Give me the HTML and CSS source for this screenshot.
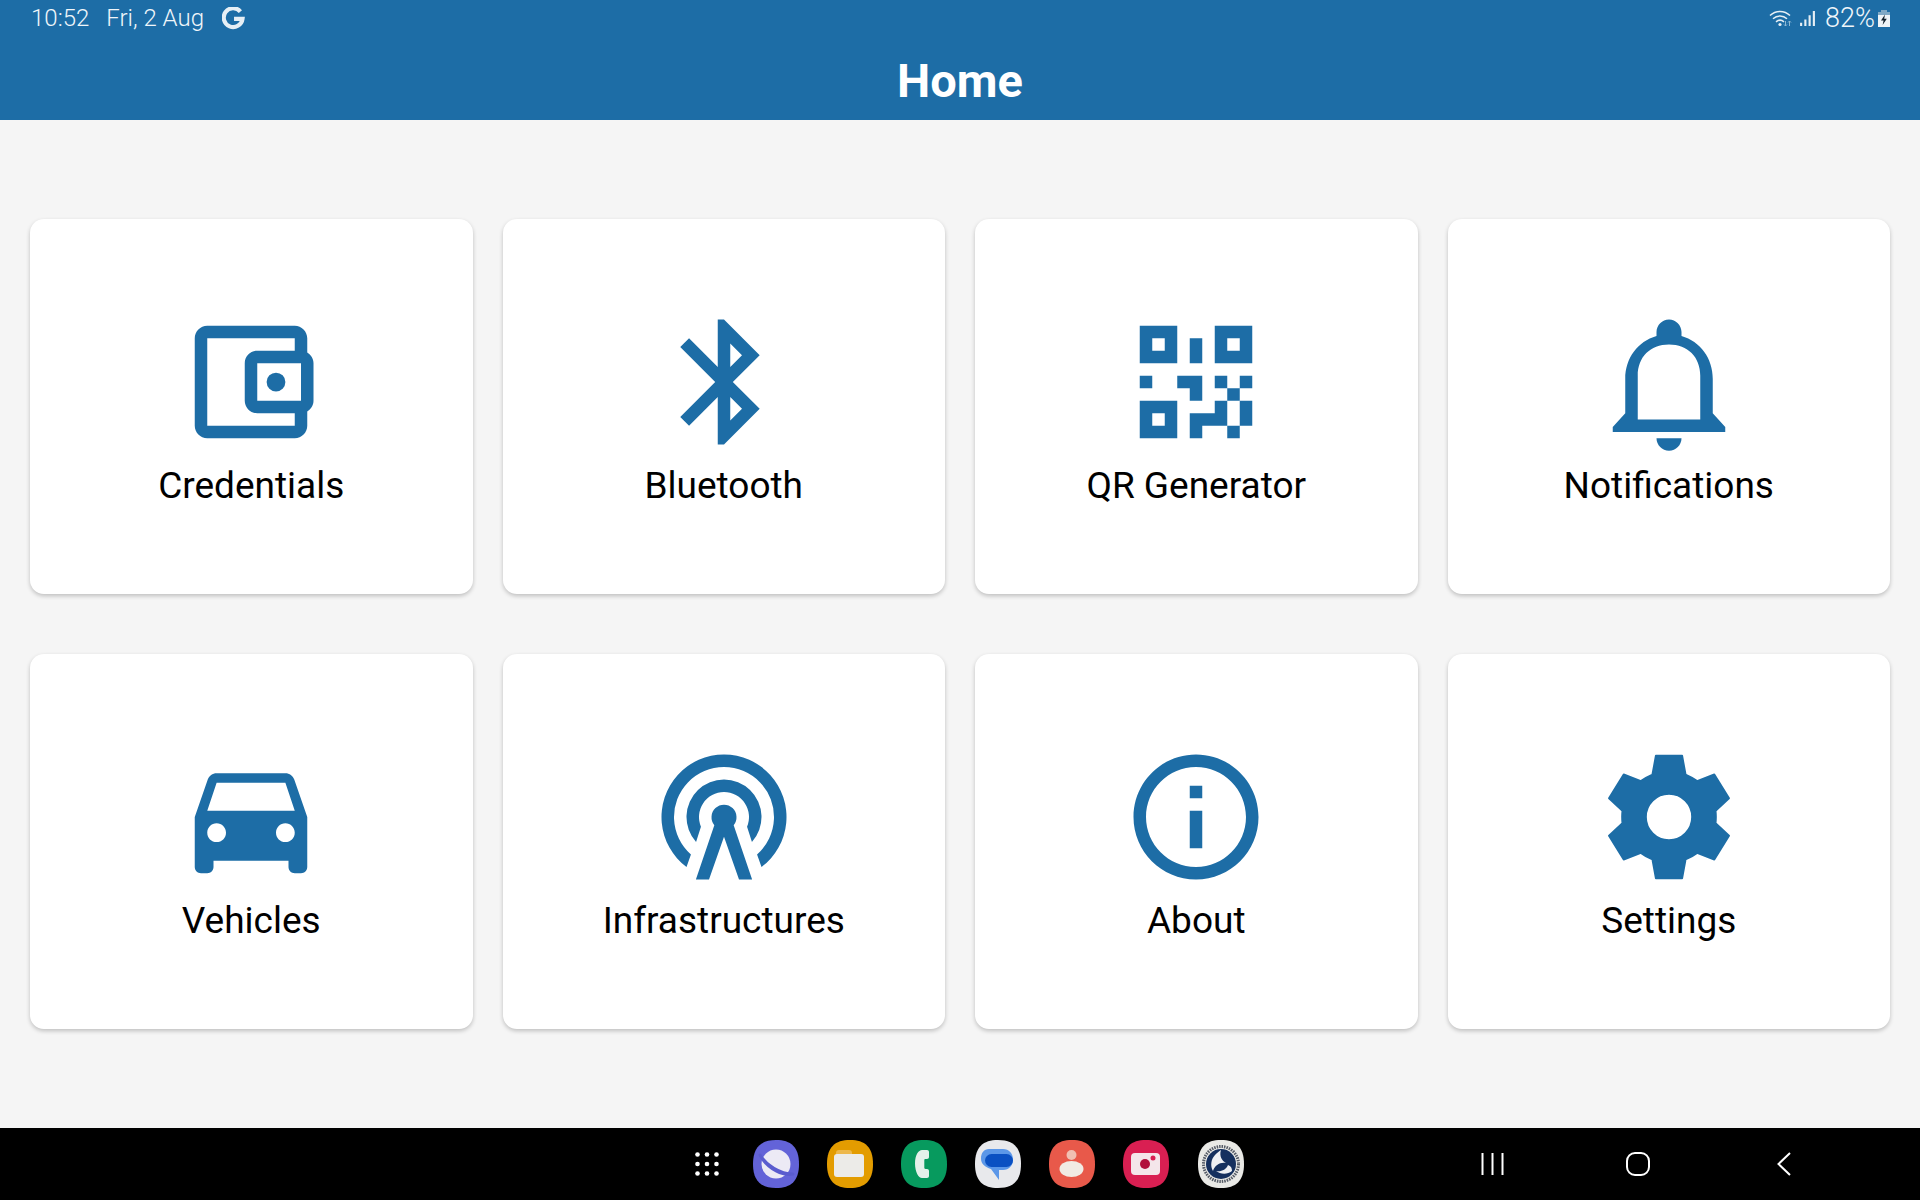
FILE: index.html
```html
<!DOCTYPE html>
<html lang="en">
<head>
<meta charset="utf-8">
<title>Home</title>
<link rel="stylesheet" href="styles.css">
</head>
<body>
<div class="app">
  <header class="header">
    <div class="statusbar">
      <div class="status-left">
        <span class="time">10:52</span>
        <span class="date">Fri, 2 Aug</span>
        <svg class="g-icon" viewBox="0 0 22 22"><path d="M17.6 4.4A9 9 0 1 0 19.6 11.4H11.5" fill="none" stroke="#e6eff5" stroke-width="4"/></svg>
      </div>
      <div class="status-right">
        <svg class="wifi" viewBox="0 0 24 18"><path d="M1 6.5C6.5 1 15.5 1 21 6.5M4 9.8C8 5.9 14 5.9 18 9.8M7 12.8C9.4 10.8 12.6 10.8 15 12.8" fill="none" stroke="#e6eff5" stroke-width="1.5"/><circle cx="11" cy="15.5" r="1.6" fill="#e6eff5"/><path d="M16.5 12v5M20.5 12v5M15 15.5l1.5 1.5 1.5-1.5M19 13.5l1.5-1.5 1.5 1.5" fill="none" stroke="#8fbad6" stroke-width="1"/></svg>
        <svg class="signal" viewBox="0 0 16 16"><path d="M1 12h2v3H1zM5 9h2v6H5zM9 5h2v10H9zM13 1h2v14h-2z" fill="#e6eff5"/></svg>
        <span class="battery-text">82%</span>
        <svg class="battery" viewBox="0 0 12 17"><path d="M3 0h6v2H3z" fill="#7fa9c6"/><path d="M0 2h12v3H0z" fill="#7fa9c6"/><path d="M0 5h12v12H0z" fill="#eef4f8"/><path d="M7 4.5 3 10.5h2.6L4.6 15l4.2-6.2H6.2z" fill="#10202c"/></svg>
      </div>
    </div>
    <h1 class="title">Home</h1>
  </header>

  <main class="grid">
    <a class="card">
      <svg class="icon" viewBox="0 0 24 24"><path d="M21 7.28V5c0-1.1-.9-2-2-2H5c-1.11 0-2 .9-2 2v14c0 1.1.89 2 2 2h14c1.1 0 2-.9 2-2v-2.28c.59-.35 1-.98 1-1.72V9c0-.74-.41-1.37-1-1.72zM20 9v6h-7V9h7zM5 19V5h14v2h-6c-1.1 0-2 .9-2 2v6c0 1.1.9 2 2 2h6v2H5z"/><circle cx="16" cy="12" r="1.5"/></svg>
      <span class="label">Credentials</span>
    </a>
    <a class="card">
      <svg class="icon" viewBox="0 0 24 24"><path d="M17.71 7.71 12 2h-1v7.59L6.41 5 5 6.41 10.59 12 5 17.59 6.41 19 11 14.41V22h1l5.71-5.71-4.3-4.29 4.3-4.29zM13 5.83l1.88 1.88L13 9.59V5.83zm1.88 10.46L13 18.17v-3.76l1.88 1.88z"/></svg>
      <span class="label">Bluetooth</span>
    </a>
    <a class="card">
      <svg class="icon" viewBox="0 0 24 24"><path fill-rule="evenodd" d="M3 3h6v6H3zM5 5v2h2V5zM15 3h6v6h-6zM17 5v2h2V5zM3 15h6v6H3zM5 17v2h2v-2zM11 5h2v4h-2zM3 11h2v2H3zM9 11h4v4h-2v-2H9zM15 11h2v2h-2zM19 11h2v2h-2zM17 13h2v2h-2zM15 15h2v4h-4v2h-2v-4h4zM19 15h2v4h-2zM17 19h2v2h-2z"/></svg>
      <span class="label">QR Generator</span>
    </a>
    <a class="card">
      <svg class="icon" viewBox="0 0 24 24"><path fill-rule="evenodd" d="M12 2c1.100 0 2 .9 2 2v.65C17 5.500 19 8.200 19 11.500V17l2 2.200V20H3v-.8L5 17V11.500C5 8.200 7 5.500 10 4.650V4c0-1.100.9-2 2-2zM7 18h10V11C17 8 15 6 12 6S7 8 7 11z"/><path d="M10 21h4c0 1.100-.9 2-2 2s-2-.9-2-2z"/></svg>
      <span class="label">Notifications</span>
    </a>
    <a class="card">
      <svg class="icon" viewBox="0 0 24 24"><path d="M18.92 6.01C18.72 5.42 18.16 5 17.5 5h-11c-.66 0-1.21.42-1.42 1.01L3 12v8c0 .55.45 1 1 1h1c.55 0 1-.45 1-1v-1h12v1c0 .55.45 1 1 1h1c.55 0 1-.45 1-1v-8l-2.08-5.99zM6.5 16c-.83 0-1.5-.67-1.5-1.5S5.67 13 6.5 13s1.5.67 1.5 1.5S7.33 16 6.5 16zm11 0c-.83 0-1.5-.67-1.5-1.5s.67-1.5 1.5-1.5 1.5.67 1.5 1.5-.67 1.5-1.5 1.5zM5 11l1.5-4.5h11L19 11H5z"/></svg>
      <span class="label">Vehicles</span>
    </a>
    <a class="card">
      <svg class="icon" viewBox="0 0 24 24"><path d="M6 20A10 10 0 1 1 18 20L17.29 18A8 8 0 1 0 6.71 18Z"/><path d="M7.53 16A6 6 0 1 1 16.47 16L15.69 13.55A4 4 0 1 0 8.31 13.55Z"/><path d="M10.45 13.3A2 2 0 1 1 13.55 13.3L16.5 22H14.4L12 15.15 9.6 22H7.5Z"/></svg>
      <span class="label">Infrastructures</span>
    </a>
    <a class="card">
      <svg class="icon" viewBox="0 0 24 24"><path d="M11 7h2v2h-2zm0 4h2v6h-2zm1-9C6.48 2 2 6.48 2 12s4.48 10 10 10 10-4.48 10-10S17.52 2 12 2zm0 18c-4.41 0-8-3.59-8-8s3.59-8 8-8 8 3.59 8 8-3.59 8-8 8z"/></svg>
      <span class="label">About</span>
    </a>
    <a class="card">
      <svg class="icon" viewBox="0 0 24 24"><path class="gear" fill-rule="evenodd" d="M9.9 2.200H14.100L14.650 5.200Q15.700 5.650 16.500 6.250L19.250 5.200 21.600 9 19.450 11Q19.550 12 19.450 13L21.600 15 19.250 18.800 16.500 17.750Q15.700 18.350 14.650 18.800L14.100 21.800H9.900L9.350 18.800Q8.300 18.350 7.500 17.750L4.750 18.800 2.400 15 4.550 13Q4.450 12 4.550 11L2.400 9 4.750 5.200 7.500 6.250Q8.300 5.650 9.350 5.200ZM12 8.300A3.700 3.700 0 1 0 12 15.700 3.700 3.700 0 1 0 12 8.300Z"/></svg>
      <span class="label">Settings</span>
    </a>
  </main>

  <nav class="navbar">
    <svg class="dots" viewBox="0 0 24 24" fill="#fff"><circle cx="2.5" cy="2.5" r="2.3"/><circle cx="12" cy="2.5" r="2.3"/><circle cx="21.5" cy="2.5" r="2.3"/><circle cx="2.5" cy="12" r="2.3"/><circle cx="12" cy="12" r="2.3"/><circle cx="21.5" cy="12" r="2.3"/><circle cx="2.5" cy="21.5" r="2.3"/><circle cx="12" cy="21.5" r="2.3"/><circle cx="21.5" cy="21.5" r="2.3"/></svg>
    <div class="dock">
      <svg class="app-icon" viewBox="0 0 48 48"><path d="M24 0C39 0 47 7 47 24S39 48 24 48 1 41 1 24 9 0 24 0z" fill="#6363d8"/><circle cx="24" cy="24" r="14.5" fill="#eceaf5"/><path d="M8 15C14 25 28 34 41 34 32 36 16 30 8 15z" fill="#5a5ccf" stroke="#5a5ccf" stroke-width="3" stroke-linejoin="round"/></svg>
      <svg class="app-icon" viewBox="0 0 48 48"><path d="M24 0C39 0 47 7 47 24S39 48 24 48 1 41 1 24 9 0 24 0z" fill="#e39c00"/><path d="M10 13a3 3 0 0 1 3-3h10a3 3 0 0 1 3 3v3H10z" fill="#edb84c"/><rect x="8" y="14" width="30" height="23" rx="3" fill="#ecebe8"/></svg>
      <svg class="app-icon" viewBox="0 0 48 48"><path d="M24 0C39 0 47 7 47 24S39 48 24 48 1 41 1 24 9 0 24 0z" fill="#079a5e"/><path d="M22 10h5c1.2 0 2 .8 2 2v5c0 1.200-.8 2-2 2h-1.500c-.8 0-1.200.5-1.200 1.200v7.600c0 .7.400 1.200 1.200 1.200H27c1.200 0 2 .8 2 2v5c0 1.200-.8 2-2 2h-5c-3.500 0-7-6-7-14.500S18.500 10 22 10z" fill="#e4f1ea"/></svg>
      <svg class="app-icon" viewBox="0 0 48 48"><path d="M24 0C39 0 47 7 47 24S39 48 24 48 1 41 1 24 9 0 24 0z" fill="#e8e9ec"/><path d="M15 9h14c6 0 10 4.500 10 10.500S35 30 29 30h-4v10l-8-11C11 27 7 24 7 18.500 7 13 10 9 15 9z" fill="#5b97e8"/><rect x="11" y="14" width="28" height="13" rx="6.500" fill="#0a50c2"/></svg>
      <svg class="app-icon" viewBox="0 0 48 48"><path d="M24 0C39 0 47 7 47 24S39 48 24 48 1 41 1 24 9 0 24 0z" fill="#e8594a"/><circle cx="23.500" cy="15" r="5" fill="#f0bfb2"/><ellipse cx="23.500" cy="29" rx="12" ry="8" fill="#f1ebe4"/></svg>
      <svg class="app-icon" viewBox="0 0 48 48"><path d="M24 0C39 0 47 7 47 24S39 48 24 48 1 41 1 24 9 0 24 0z" fill="#d91f52"/><rect x="9" y="13" width="29" height="22" rx="4" fill="#f4e6ea"/><circle cx="23" cy="24" r="5" fill="#b1103c"/><circle cx="31" cy="18" r="2.500" fill="#d91f52"/></svg>
      <svg class="app-icon" viewBox="0 0 48 48"><path d="M24 0C39 0 47 7 47 24S39 48 24 48 1 41 1 24 9 0 24 0z" fill="#e9e9e6"/><circle cx="24" cy="24" r="17.500" fill="none" stroke="#555b66" stroke-width="3" stroke-dasharray="1.500 1"/><circle cx="24" cy="24" r="15" fill="#15305f"/><path d="M24 10c-2 6 1 11 5 13-6-1-11 2-13 8-3-5-2-12 2-16 2-2 4-4 6-5zM35 31c-5 4-12 3-16 0 5 1 10-1 12-6 3 1 4 3 4 6z" fill="#eef0f4"/></svg>
    </div>
    <div class="nav-buttons">
      <svg class="nav-recents" viewBox="0 0 24 24"><path d="M2.500 1v22M12.500 1v22M22.500 1v22" fill="none" stroke="#fff" stroke-width="2"/></svg>
      <svg class="nav-home" viewBox="0 0 24 24"><rect x="1" y="1" width="22" height="22" rx="8" fill="none" stroke="#fff" stroke-width="2"/></svg>
      <svg class="nav-back" viewBox="0 0 14 24"><path d="M13 1 1.500 12 13 23" fill="none" stroke="#fff" stroke-width="2"/></svg>
    </div>
  </nav>
</div>
</body>
</html>
```
FILE: styles.css
```css
* { box-sizing: border-box; }
html, body { margin: 0; height: 100%; }
body { font-family: Roboto, "Liberation Sans", sans-serif; background: #f5f5f5; color: #000; }
.app { display: flex; flex-direction: column; height: 1200px; overflow: hidden; }

.header { height: 120px; background: #1d6da6; color: #f0f6fa; flex: none; }
.statusbar { height: 36px; display: flex; align-items: center; justify-content: space-between; padding: 0 30px 0 31px; font-size: 24px; font-weight: 300; }
.status-left, .status-right { display: flex; align-items: center; }
.date { margin-left: 17px; }
.g-icon { width: 23px; height: 23px; margin-left: 18px; }
.wifi { width: 24px; height: 18px; }
.signal { width: 17px; height: 17px; margin-left: 6px; }
.battery-text { margin-left: 9px; font-size: 27px; }
.battery { width: 12px; height: 17px; margin-left: 3px; }
.title { margin: 0; height: 84px; padding-top: 5px; display: flex; align-items: center; justify-content: center; color: #fff; font-size: 47px; font-weight: 700; }

.grid { flex: 1; display: grid; grid-template-columns: repeat(4, 1fr); grid-auto-rows: 375px; gap: 60px 30px; align-content: center; padding: 0 30px; }
.card { background: #fff; border-radius: 14px; box-shadow: 0 2px 4px rgba(0, 0, 0, .22); display: flex; flex-direction: column; align-items: center; justify-content: center; padding-top: 3px; }
.icon { width: 150px; height: 150px; fill: #1d6da6; display: block; }
.gear { stroke: #1d6da6; stroke-width: .3; stroke-linejoin: round; }
.label { font-size: 37px; line-height: 47px; margin-top: 5px; color: #000; }

.navbar { height: 72px; flex: none; background: #000; display: flex; align-items: center; padding-left: 695px; }
.dots { width: 24px; height: 24px; }
.dock { display: flex; gap: 26.1px; margin-left: 33px; }
.app-icon { width: 48px; height: 48px; display: block; }
.nav-buttons { display: flex; align-items: center; margin-left: 235px; }
.nav-recents { width: 24px; height: 24px; }
.nav-home { width: 24px; height: 24px; margin-left: 122px; }
.nav-back { width: 14px; height: 24px; margin-left: 127px; }
```
